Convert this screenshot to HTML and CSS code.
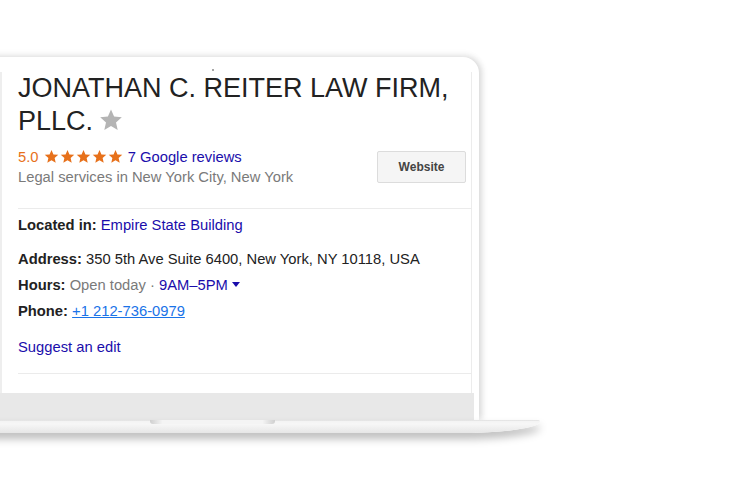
FILE: index.html
```html
<!DOCTYPE html>
<html lang="en">
<head>
    <meta charset="UTF-8">
    <meta name="viewport" content="width=device-width, initial-scale=1.0">
    <title>Knowledge panel</title>
    <link rel="stylesheet" href="styles.css">
</head>
<body>
    <svg class="defs" width="0" height="0">
        <symbol id="star" viewBox="0 0 24 24">
            <path d="M12 1.5l3.1 7.1 7.7.7-5.8 5.1 1.7 7.6L12 18l-6.7 4 1.7-7.6-5.8-5.1 7.7-.7z"/>
        </symbol>
    </svg>
    <div class="laptop">
        <div class="lid">
            <div class="lid-top"><span class="camera"></span></div>
            <div class="screen">
                <h1 class="title">JONATHAN C. REITER LAW FIRM, PLLC. <svg class="fav"><use href="#star"/></svg></h1>
                <div class="header-row">
                    <div class="header-info">
                        <div class="rating">
                            <span class="score">5.0</span>
                            <span class="stars">
                                <svg><use href="#star"/></svg><svg><use href="#star"/></svg><svg><use href="#star"/></svg><svg><use href="#star"/></svg><svg><use href="#star"/></svg>
                            </span>
                            <a class="link" href="#">7 Google reviews</a>
                        </div>
                        <div class="category">Legal services in New York City, New York</div>
                    </div>
                    <a class="btn-website" href="#">Website</a>
                </div>
                <div class="divider"></div>
                <div class="fact located"><b>Located in:</b> <a class="link" href="#">Empire State Building</a></div>
                <div class="fact address"><b>Address:</b> 350 5th Ave Suite 6400, New York, NY 10118, USA</div>
                <div class="fact"><b>Hours:</b> <span class="muted">Open today · </span><a class="link" href="#">9AM–5PM</a><span class="caret"></span></div>
                <div class="fact"><b>Phone:</b> <a class="phone" href="#">+1 212-736-0979</a></div>
                <div class="fact suggest"><a class="link" href="#">Suggest an edit</a></div>
                <div class="divider bottom"></div>
            </div>
            <div class="chin"></div>
        </div>
        <div class="base"><div class="notch"></div></div>
    </div>
</body>
</html>
```

FILE: styles.css
```css
body {
    margin: 0;
    background: #fff;
    font-family: "Liberation Sans", Arial, sans-serif;
    width: 750px;
    height: 500px;
    overflow: hidden;
}

.defs {
    position: absolute;
}

.laptop {
    padding-top: 57px;
}

.lid {
    width: 499px;
    margin-left: -20px;
    padding: 0 7px 0 20px;
    box-sizing: border-box;
    background: #fff;
    border-radius: 0 16px 0 0;
    box-shadow: 3px 0 6px rgba(0, 0, 0, 0.13), 0 -2px 8px rgba(0, 0, 0, 0.05);
}

.lid-top {
    height: 15px;
    display: flex;
}

.camera {
    width: 2px;
    height: 2px;
    border-radius: 50%;
    background: #8a8a8a;
    margin: 12px 0 0 212px;
}

.screen {
    height: 321px;
    padding: 0 6px 0 16px;
    border-left: 2px solid #eeeeee;
    border-right: 1px solid #ececec;
    color: #222;
    font-size: 14.75px;
}

.title {
    margin: 0;
    font-size: 27px;
    font-weight: normal;
    line-height: 33px;
    color: #222;
    width: 440px;
}

.fav {
    width: 24px;
    height: 24px;
    fill: #b4b4b4;
    vertical-align: -2px;
    margin-left: -2px;
}

.header-row {
    display: flex;
    align-items: center;
    justify-content: space-between;
    margin-top: 9px;
}

.rating, .category, .fact {
    line-height: 20px;
}

.score {
    color: #e7711b;
}

.stars {
    display: inline-flex;
    gap: 1px;
    vertical-align: -2px;
    margin: 0 1px;
}

.stars svg {
    width: 15px;
    height: 15px;
    fill: #e7711b;
}

.link {
    color: #1a0dab;
    text-decoration: none;
}

.category, .muted {
    color: #7a7a7a;
}

.btn-website {
    width: 89px;
    height: 32px;
    box-sizing: border-box;
    margin-right: -1px;
    border: 1px solid #dcdcdc;
    border-radius: 2px;
    background: #f5f5f5;
    color: #444;
    font-size: 12px;
    font-weight: bold;
    text-decoration: none;
    display: flex;
    align-items: center;
    justify-content: center;
}

.divider {
    border-top: 1px solid #ebebeb;
    margin: 21px -7px 0 0;
}

.divider.bottom {
    margin-top: 16px;
}

.fact {
    margin-top: 6px;
}

.fact b {
    color: #222;
}

.address {
    margin-top: 14px;
}

.suggest {
    margin-top: 16px;
}

.caret {
    display: inline-block;
    border-left: 4px solid transparent;
    border-right: 4px solid transparent;
    border-top: 5px solid #1a0dab;
    margin-left: 4px;
    vertical-align: 3px;
}

.phone {
    color: #1a73e8;
    text-decoration: underline;
}

.chin {
    height: 27px;
    background: #e8e8e8;
    margin: 0 -2px 0 -20px;
}

.base {
    width: 560px;
    height: 13px;
    margin-left: -20px;
    background: linear-gradient(#d8d8d8 0, #f3f3f3 1px, #f7f7f7 4px, #e6e6e6 100%);
    border-radius: 0 2px 90px 0 / 0 2px 12px 0;
    box-shadow: 0 6px 8px rgba(0, 0, 0, 0.26);
}

.notch {
    width: 125px;
    height: 4px;
    margin-left: 170px;
    border-radius: 0 0 3px 3px;
    background: linear-gradient(to right, #cfcfcf, #f4f4f4 10%, #f4f4f4 90%, #cfcfcf);
}
```
